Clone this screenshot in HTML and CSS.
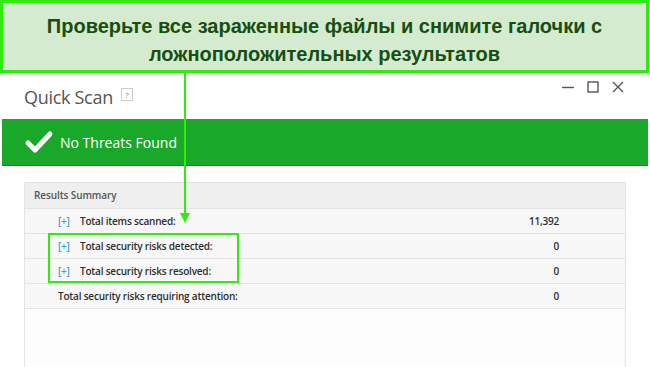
FILE: index.html
```html
<!DOCTYPE html>
<html lang="ru">
<head>
    <meta charset="UTF-8">
    <meta name="viewport" content="width=device-width, initial-scale=1.0">
    <title>Quick Scan</title>
    <link rel="stylesheet" href="styles.css">
</head>
<body>

<div class="page">
    <!-- Подсказка сверху -->
    <div class="callout">
        Проверьте все зараженные файлы и снимите галочки с<br>ложноположительных результатов
    </div>

    <div class="window">
        <div class="titlebar">
            <span class="title">Quick Scan</span>
            <span class="help">?</span>
            <div class="controls">
                <svg width="14" height="14" viewBox="0 0 14 14"><path d="M1 7.5h12" stroke="#555" stroke-width="1.4"/></svg>
                <svg width="14" height="14" viewBox="0 0 14 14"><rect x="2" y="2" width="10" height="10" fill="none" stroke="#555" stroke-width="1.4"/></svg>
                <svg width="14" height="14" viewBox="0 0 14 14"><path d="M2 2l10 10M12 2L2 12" stroke="#555" stroke-width="1.4"/></svg>
            </div>
        </div>

        <div class="status">
            <svg class="check" width="30" height="24" viewBox="0 0 30 24"><path d="M4 13l7 7L26 4" fill="none" stroke="#fff" stroke-width="5" stroke-linecap="round" stroke-linejoin="round"/></svg>
            <span>No Threats Found</span>
        </div>

        <div class="panel">
            <div class="panel-head">Results Summary</div>
            <div class="row">
                <span class="toggle">[+]</span>
                <span class="label">Total items scanned:</span>
                <span class="value">11,392</span>
            </div>
            <div class="row">
                <span class="toggle">[+]</span>
                <span class="label">Total security risks detected:</span>
                <span class="value">0</span>
            </div>
            <div class="row">
                <span class="toggle">[+]</span>
                <span class="label">Total security risks resolved:</span>
                <span class="value">0</span>
            </div>
            <div class="row plain">
                <span class="label">Total security risks requiring attention:</span>
                <span class="value">0</span>
            </div>
        </div>
    </div>

    <!-- Стрелка и рамка выделения -->
    <div class="pointer"></div>
    <div class="arrowhead"></div>
    <div class="highlight"></div>
</div>

</body>
</html>
```

FILE: styles.css
```css
body {
    margin: 0;
    padding: 0;
    background-color: #fff;
    font-family: "Open Sans", "Noto Sans", sans-serif;
}
.page {
    position: relative;
    width: 650px;
    height: 367px;
    overflow: hidden;
}
.callout {
    height: 73px;
    border: 3px solid #2fec0c;
    background-color: #d5ebd0;
    color: #174f10;
    font-family: "Liberation Sans", Arial, sans-serif;
    font-weight: bold;
    font-size: 20px;
    line-height: 28px;
    text-align: center;
    padding-top: 9px;
    box-sizing: border-box;
    margin-right: 1px;
}
.window {
    margin: 0 2px;
}
.titlebar {
    display: flex;
    align-items: flex-start;
    height: 46px;
    padding-left: 22px;
}
.title {
    font-size: 18px;
    color: #555;
    margin-top: 12px;
    letter-spacing: -0.3px;
}
.help {
    margin: 15px 0 0 8px;
    width: 10px;
    height: 11px;
    border: 1px solid #ccc;
    font-size: 8px;
    line-height: 11px;
    text-align: center;
    color: #888;
}
.controls {
    margin-left: auto;
    display: flex;
    gap: 11px;
    margin-top: 7px;
    margin-right: 23px;
}
.status {
    display: flex;
    align-items: center;
    height: 46px;
    background-color: #1aa82b;
    border-bottom: 1px solid #128a20;
    padding-left: 22px;
    color: #fff;
    font-size: 14px;
}
.check {
    margin-right: 6px;
}
.panel {
    margin: 16px 22px 0 22px;
    border: 1px solid #e3e3e3;
    border-bottom: none;
    background-color: #fcfcfc;
    height: 200px;
}
.panel-head {
    height: 25px;
    line-height: 25px;
    background-color: #efefef;
    border-bottom: 1px solid #e3e3e3;
    padding-left: 9px;
    font-size: 10px;
    font-weight: 600;
    color: #555;
    letter-spacing: -0.1px;
}
.row {
    display: flex;
    align-items: center;
    height: 24px;
    background-color: #f7f7f7;
    border-bottom: 1px solid #e3e3e3;
    padding-left: 33px;
    font-size: 10px;
    letter-spacing: -0.2px;
}
.toggle {
    color: #3e9edc;
    font-weight: 600;
    width: 22px;
}
.label {
    color: #2e2e2e;
    font-weight: 600;
}
.value {
    margin-left: auto;
    margin-right: 66px;
    color: #2e2e2e;
    font-weight: 600;
}
.pointer {
    position: absolute;
    left: 184px;
    top: 73px;
    width: 2px;
    height: 142px;
    background-color: #2fec0c;
}
.arrowhead {
    position: absolute;
    left: 180px;
    top: 213px;
    width: 0;
    height: 0;
    border-left: 5px solid transparent;
    border-right: 5px solid transparent;
    border-top: 10px solid #2fec0c;
}
.highlight {
    position: absolute;
    left: 48px;
    top: 233px;
    width: 187px;
    height: 46px;
    border: 2px solid #2fec0c;
}
```
